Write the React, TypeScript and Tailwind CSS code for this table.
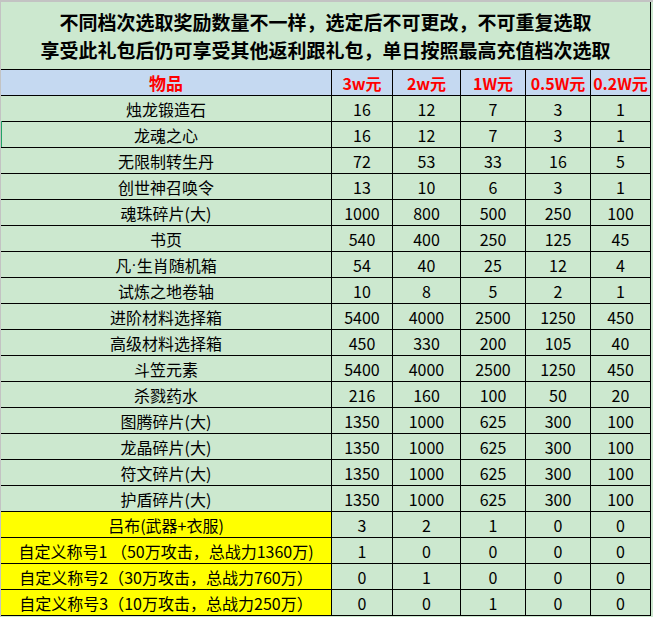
const FONT = { fontFamily: '"Noto Sans CJK SC", "Noto Sans", sans-serif' };

const HEADERS = ["3w元", "2w元", "1W元", "0.5W元", "0.2W元"];

const ROWS: Array<{ name: React.ReactNode; values: string[]; yellow?: boolean }> = [
  { name: "烛龙锻造石", values: ["16", "12", "7", "3", "1"] },
  { name: "龙魂之心", values: ["16", "12", "7", "3", "1"] },
  { name: "无限制转生丹", values: ["72", "53", "33", "16", "5"] },
  { name: "创世神召唤令", values: ["13", "10", "6", "3", "1"] },
  { name: "魂珠碎片(大)", values: ["1000", "800", "500", "250", "100"] },
  { name: "书页", values: ["540", "400", "250", "125", "45"] },
  {
    name: (
      <>
        凡<span style={{ fontFamily: '"Liberation Sans", sans-serif' }}>·</span>生肖随机箱
      </>
    ),
    values: ["54", "40", "25", "12", "4"],
  },
  { name: "试炼之地卷轴", values: ["10", "8", "5", "2", "1"] },
  { name: "进阶材料选择箱", values: ["5400", "4000", "2500", "1250", "450"] },
  { name: "高级材料选择箱", values: ["450", "330", "200", "105", "40"] },
  { name: "斗笠元素", values: ["5400", "4000", "2500", "1250", "450"] },
  { name: "杀戮药水", values: ["216", "160", "100", "50", "20"] },
  { name: "图腾碎片(大)", values: ["1350", "1000", "625", "300", "100"] },
  { name: "龙晶碎片(大)", values: ["1350", "1000", "625", "300", "100"] },
  { name: "符文碎片(大)", values: ["1350", "1000", "625", "300", "100"] },
  { name: "护盾碎片(大)", values: ["1350", "1000", "625", "300", "100"] },
  { name: "吕布(武器+衣服)", values: ["3", "2", "1", "0", "0"], yellow: true },
  { name: "自定义称号1 （50万攻击，总战力1360万)", values: ["1", "0", "0", "0", "0"], yellow: true },
  { name: "自定义称号2（30万攻击，总战力760万）", values: ["0", "1", "0", "0", "0"], yellow: true },
  { name: "自定义称号3（10万攻击，总战力250万）", values: ["0", "0", "1", "0", "0"], yellow: true },
];

const COL_WIDTHS = ["w-[61px]", "w-[68px]", "w-[65px]", "w-[65px]", "w-[60px]"];

export default function App() {
  return (
    <div
      className="relative w-[653px] h-[617px] overflow-hidden bg-[#cce8cf] border-t-2 border-l border-[#c3c3c3] text-black"
      style={FONT}
    >
      <div className="w-[650px] h-[67px] border-r border-black flex flex-col items-center justify-center gap-[3px] text-[19px] font-bold leading-[25px]">
        <div>不同档次选取奖励数量不一样，选定后不可更改，不可重复选取</div>
        <div>享受此礼包后仍可享受其他返利跟礼包，单日按照最高充值档次选取</div>
      </div>

      <div className="w-[650px]">
        <div className="flex h-[27px] border-t border-b border-black bg-[#c5d9f1] text-[16px] font-bold text-[#ff0000]">
          <div className="w-[331px] shrink-0 border-r border-black flex items-center justify-center text-[17px]">物品</div>
          {HEADERS.map((h, i) => (
            <div
              key={h}
              className={`${COL_WIDTHS[i]} shrink-0 border-r border-black flex items-center justify-center whitespace-nowrap`}
            >
              {h}
            </div>
          ))}
        </div>

        {ROWS.map((row, r) => (
          <div key={r} className="flex h-[26px] border-b border-black text-[16px]">
            <div
              className={`w-[331px] shrink-0 border-r border-black flex items-center justify-center whitespace-nowrap ${
                row.yellow ? "bg-[#ffff00]" : ""
              }`}
            >
              {row.name}
            </div>
            {row.values.map((v, i) => (
              <div
                key={i}
                className={`${COL_WIDTHS[i]} shrink-0 border-r border-black flex items-center justify-center`}
              >
                {v}
              </div>
            ))}
          </div>
        ))}
      </div>

      {/* selected row marker on the sheet edge */}
      <div className="absolute left-[-1px] top-[119px] w-[2px] h-[26px] bg-[#21a366]" />
    </div>
  );
}
